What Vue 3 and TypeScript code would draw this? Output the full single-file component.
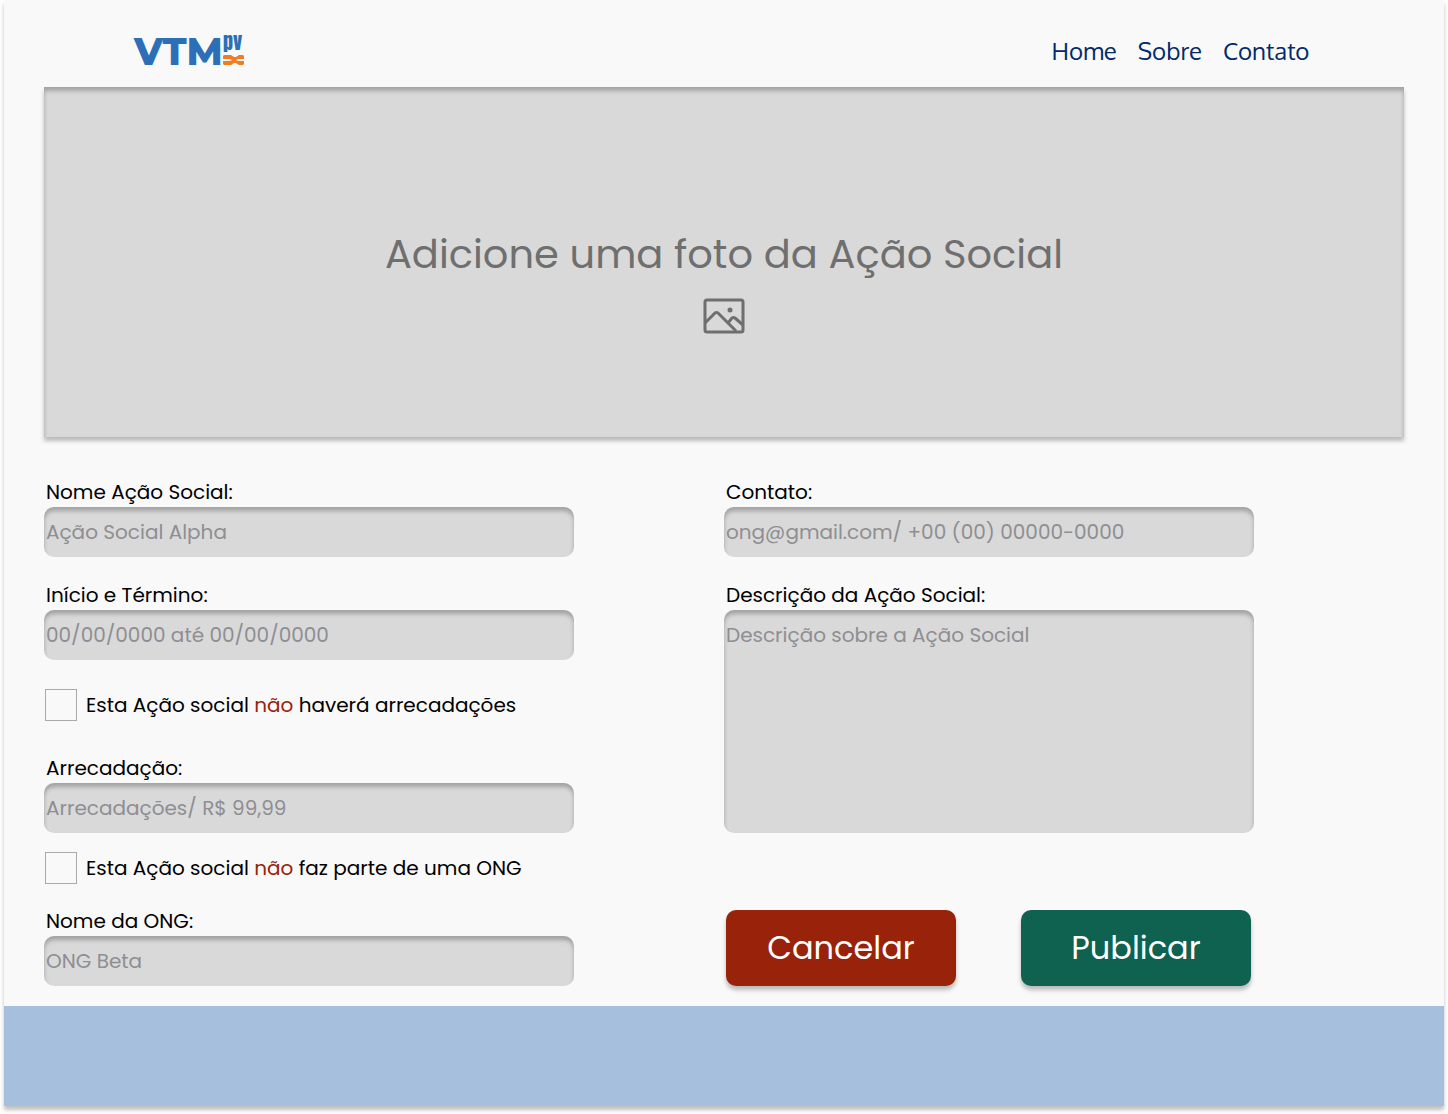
<script setup lang="ts">
import { reactive } from 'vue'

interface ActionForm {
  name: string
  period: string
  noFunds: boolean
  funds: string
  noOrg: boolean
  org: string
  contact: string
  description: string
}

const links: string[] = ['Home', 'Sobre', 'Contato']

const form = reactive<ActionForm>({
  name: '',
  period: '',
  noFunds: false,
  funds: '',
  noOrg: false,
  org: '',
  contact: '',
  description: '',
})
</script>

<template>
  <div class="page">
    <header class="header">
      <a class="logo" href="#" aria-label="VTM pv">
        <svg width="112" height="32" viewBox="0 0 112 32">
          <text class="logo-main" x="0" y="30">VTM</text>
          <text class="logo-sub" x="89" y="15">pv</text>
          <g fill="#f47b20">
            <path d="M90 20h7l3 2h2l3-2h4l1 1v3h-6l-2 1h-4l-2-1h-7v-3z" />
            <path d="M90 30h7l3-2h2l3 2h4l1-1v-3h-6l-2-1h-4l-2 1h-7v3z" />
          </g>
        </svg>
      </a>
      <nav class="nav">
        <a v-for="link in links" :key="link" href="#">{{ link }}</a>
      </nav>
    </header>

    <main class="main">
      <button type="button" class="photo">
        <span>Adicione uma foto da Ação Social</span>
        <svg width="42" height="36" viewBox="0 0 42 36" fill="none" stroke="#6f6f6f" stroke-width="3" stroke-linejoin="round">
          <rect x="2" y="2" width="38" height="32" rx="2" />
          <path d="M2 25 12 15q1.500-1 3 0L33 33" />
          <path d="M25 25l4-5q1.500-1 3 0l8 7" />
          <circle cx="27" cy="12" r="2.500" fill="#6f6f6f" stroke="none" />
        </svg>
      </button>

      <form class="form" @submit.prevent>
        <div class="column">
          <div class="field">
            <label for="name">Nome Ação Social:</label>
            <input id="name" v-model="form.name" type="text" placeholder="Ação Social Alpha" />
          </div>
          <div class="field">
            <label for="period">Início e Término:</label>
            <input id="period" v-model="form.period" type="text" placeholder="00/00/0000 até 00/00/0000" />
          </div>
          <label class="check check-funds">
            <input v-model="form.noFunds" type="checkbox" />
            <span>Esta Ação social <em>não</em> haverá arrecadações</span>
          </label>
          <div class="field">
            <label for="funds">Arrecadação:</label>
            <input id="funds" v-model="form.funds" type="text" placeholder="Arrecadações/ R$ 99,99" />
          </div>
          <label class="check">
            <input v-model="form.noOrg" type="checkbox" />
            <span>Esta Ação social <em>não</em> faz parte de uma ONG</span>
          </label>
          <div class="field">
            <label for="org">Nome da ONG:</label>
            <input id="org" v-model="form.org" type="text" placeholder="ONG Beta" />
          </div>
        </div>

        <div class="column">
          <div class="field">
            <label for="contact">Contato:</label>
            <input id="contact" v-model="form.contact" type="text" placeholder="ong@gmail.com/ +00 (00) 00000-0000" />
          </div>
          <div class="field">
            <label for="description">Descrição da Ação Social:</label>
            <textarea id="description" v-model="form.description" placeholder="Descrição sobre a Ação Social"></textarea>
          </div>
          <div class="actions">
            <button type="button" class="cancel">Cancelar</button>
            <button type="submit" class="publish">Publicar</button>
          </div>
        </div>
      </form>
    </main>

    <footer class="footer"></footer>
  </div>
</template>

<style>
body {
  margin: 0;
  background: #fff;
}
</style>

<style scoped>
.page {
  margin: 0 4px 8px;
  background: #f9f9f9;
  box-shadow: 0 4px 4px rgba(0, 0, 0, 0.25);
  font-family: Poppins, Inter, sans-serif;
  font-size: 20px;
  line-height: 30px;
  color: #000;
}

.header {
  display: flex;
  align-items: center;
  justify-content: space-between;
  box-sizing: border-box;
  height: 87px;
  padding: 14px 9% 0;
}

.logo svg {
  display: block;
  overflow: visible;
}

.logo-main {
  font: 800 38px Montserrat, Lato, sans-serif;
  fill: #2d6fb7;
}

.logo-sub {
  font: 400 20px Anton, "Open Sans", sans-serif;
  fill: #2d6fb7;
}

.nav {
  display: flex;
  gap: 21px;
  margin-right: 5px;
  font-family: Oxygen, "Noto Sans", sans-serif;
  font-size: 24px;
}

.nav a {
  color: #032b69;
  text-decoration: none;
}

.main {
  padding: 0 40px 20px;
}

.photo {
  display: flex;
  flex-direction: column;
  align-items: center;
  justify-content: center;
  gap: 14px;
  box-sizing: border-box;
  width: 100%;
  height: 350px;
  padding: 34px 0 0;
  border: 0;
  background: #d9d9d9;
  box-shadow: 0 4px 4px rgba(0, 0, 0, 0.25), inset 0 4px 4px rgba(0, 0, 0, 0.25);
  color: #6f6f6f;
  font: inherit;
  font-size: 40px;
  line-height: 60px;
}

.form {
  display: grid;
  grid-template-columns: 1fr 1fr;
  margin-top: 40px;
}

.column {
  display: flex;
  flex-direction: column;
  gap: 23px;
}

.field {
  display: flex;
  flex-direction: column;
  max-width: 530px;
}

.field label {
  padding-left: 2px;
}

.field input,
.field textarea {
  box-sizing: border-box;
  width: 100%;
  height: 50px;
  padding: 0 2px;
  border: 0;
  border-radius: 10px;
  background: #d9d9d9;
  box-shadow: inset 0 4px 4px rgba(0, 0, 0, 0.25);
  color: #000;
  font: inherit;
}

.field textarea {
  display: block;
  height: 223px;
  padding-top: 10px;
  resize: none;
}

.field ::placeholder {
  color: #8e8e93;
  opacity: 1;
}

.check {
  display: flex;
  align-items: center;
  gap: 9px;
  height: 30px;
  margin-top: -3px;
  padding-left: 1px;
}

.check-funds {
  margin: 7px 0 10px;
}

.check input {
  appearance: none;
  box-sizing: border-box;
  width: 32px;
  height: 32px;
  margin: 0;
  border: 1px solid #aaa;
}

.check input:checked {
  background: #0f6150;
}

.check em {
  color: #98220a;
  font-style: normal;
}

.actions {
  display: flex;
  gap: 65px;
  margin-top: auto;
  padding-left: 2px;
}

.actions button {
  width: 230px;
  height: 76px;
  padding: 0;
  border: 0;
  border-radius: 10px;
  box-shadow: 0 4px 4px rgba(0, 0, 0, 0.25);
  color: #fff;
  font: inherit;
  font-size: 32px;
}

.actions .cancel {
  background: #98220a;
}

.actions .publish {
  background: #0f6150;
}

.footer {
  height: 100px;
  background: #a6bfdc;
}
</style>
